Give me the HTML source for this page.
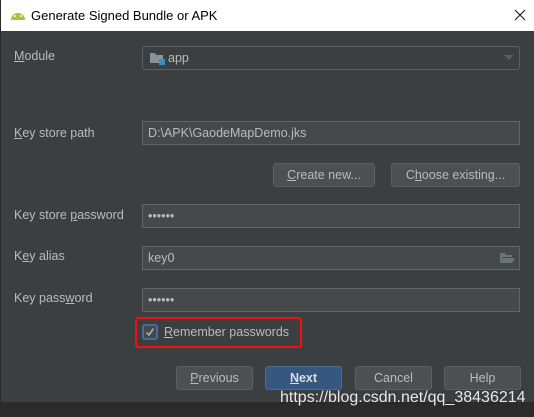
<!DOCTYPE html>
<html><head><meta charset="utf-8"><style>
*{margin:0;padding:0;box-sizing:border-box}
body{width:534px;height:417px;background:#2b2b2b;font-family:"Liberation Sans","Noto Sans CJK SC",sans-serif;font-size:12.5px;color:#bbbbbb;position:relative;overflow:hidden}
.dlg{position:absolute;left:0;top:0;width:534px;height:402px;background:#3c3f41;border-left:1px solid #2b2b2b}
.title{position:absolute;left:0;top:0;width:534px;height:31px;background:#fff;color:#000;font-size:13px}
.title span{position:absolute;left:30px;top:8px}
.a{position:absolute}
.lbl{position:absolute;left:13px}
.f{position:absolute;left:141px;width:378px;height:24px;background:#45494a;border:1px solid #646464;padding:4px 5px;color:#bbb}
.b{position:absolute;height:24px;background:#4c5052;border:1px solid #5e6060;border-radius:3px;text-align:center;line-height:22px;color:#bbb}
u{text-decoration:underline}
</style></head><body>
<div class="dlg">
<div class="title">
<svg class="a" style="left:9px;top:11px" width="16" height="9" viewBox="0 0 16 9"><path d="M1 9 A7 7 0 0 1 15 9Z" fill="#a4c639"/><circle cx="5" cy="5" r="1" fill="#fff"/><circle cx="11" cy="5" r="1" fill="#fff"/></svg>
<span>Generate Signed Bundle or APK</span>
<svg class="a" style="left:513px;top:9px" width="12" height="12"><path d="M1 1L11 11M11 1L1 11" stroke="#222" stroke-width="1.2"/></svg>
</div>
<div class="lbl" style="top:49px"><u>M</u>odule</div>
<div class="f" style="top:46px;height:24px;border-radius:3px;background:#3c3f41;border-color:#5e6060;padding-left:25px">app</div>
<svg class="a" style="left:149px;top:52px" width="15" height="13"><path d="M0 1h5l1 2h7v8H0z" fill="#8c9296"/><rect x="9" y="7" width="6" height="6" fill="#3592c4"/></svg>
<div class="a" style="left:503px;top:55px;width:0;height:0;border-left:5px solid transparent;border-right:5px solid transparent;border-top:5px solid #5b5e60"></div>
<div class="lbl" style="top:126px"><u>K</u>ey store path</div>
<div class="f" style="top:121px">D:\APK\GaodeMapDemo.jks</div>
<div class="b" style="left:272px;top:163px;width:102px"><u>C</u>reate new...</div>
<div class="b" style="left:390px;top:163px;width:129px">C<u>h</u>oose existing...</div>
<div class="lbl" style="top:208px">Key store <u>p</u>assword</div>
<div class="f" style="top:204px">••••••</div>
<div class="lbl" style="top:249px">K<u>e</u>y alias</div>
<div class="f" style="top:246px">key0</div>
<svg class="a" style="left:499px;top:253px" width="15" height="10"><path d="M0 0h5l1 2h6v2H3L0 10z M3 5h12l-3 5H0z" fill="#6e7375"/></svg>
<div class="lbl" style="top:291px">Key pass<u>w</u>ord</div>
<div class="f" style="top:288px">••••••</div>
<div class="a" style="left:134px;top:317px;width:167px;height:31px;border:2px solid #f51010;border-radius:3px"></div>
<svg class="a" style="left:141px;top:324px" width="16" height="16"><rect x="1" y="1" width="14" height="14" rx="2" fill="#43494a" stroke="#466d94" stroke-width="2"/><path d="M4.5 8.5L7 11L11.5 4.5" stroke="#aaa" stroke-width="1.6" fill="none"/></svg>
<div class="a" style="left:163px;top:325px"><u>R</u>emember passwords</div>
<div class="b" style="left:175px;top:366px;width:77px"><u>P</u>revious</div>
<div class="b" style="left:264px;top:366px;width:77px;background:#365880;border-color:#4c708c;font-weight:bold;color:#ddd"><u>N</u>ext</div>
<div class="b" style="left:354px;top:366px;width:77px">Cancel</div>
<div class="b" style="left:443px;top:366px;width:77px">Help</div>
</div>
<div class="a" style="left:280px;top:389px;font-size:16px;color:#e8e8e8;text-shadow:0 0 2px #333">https://blog.csdn.net/qq_38436214</div>
</body></html>
